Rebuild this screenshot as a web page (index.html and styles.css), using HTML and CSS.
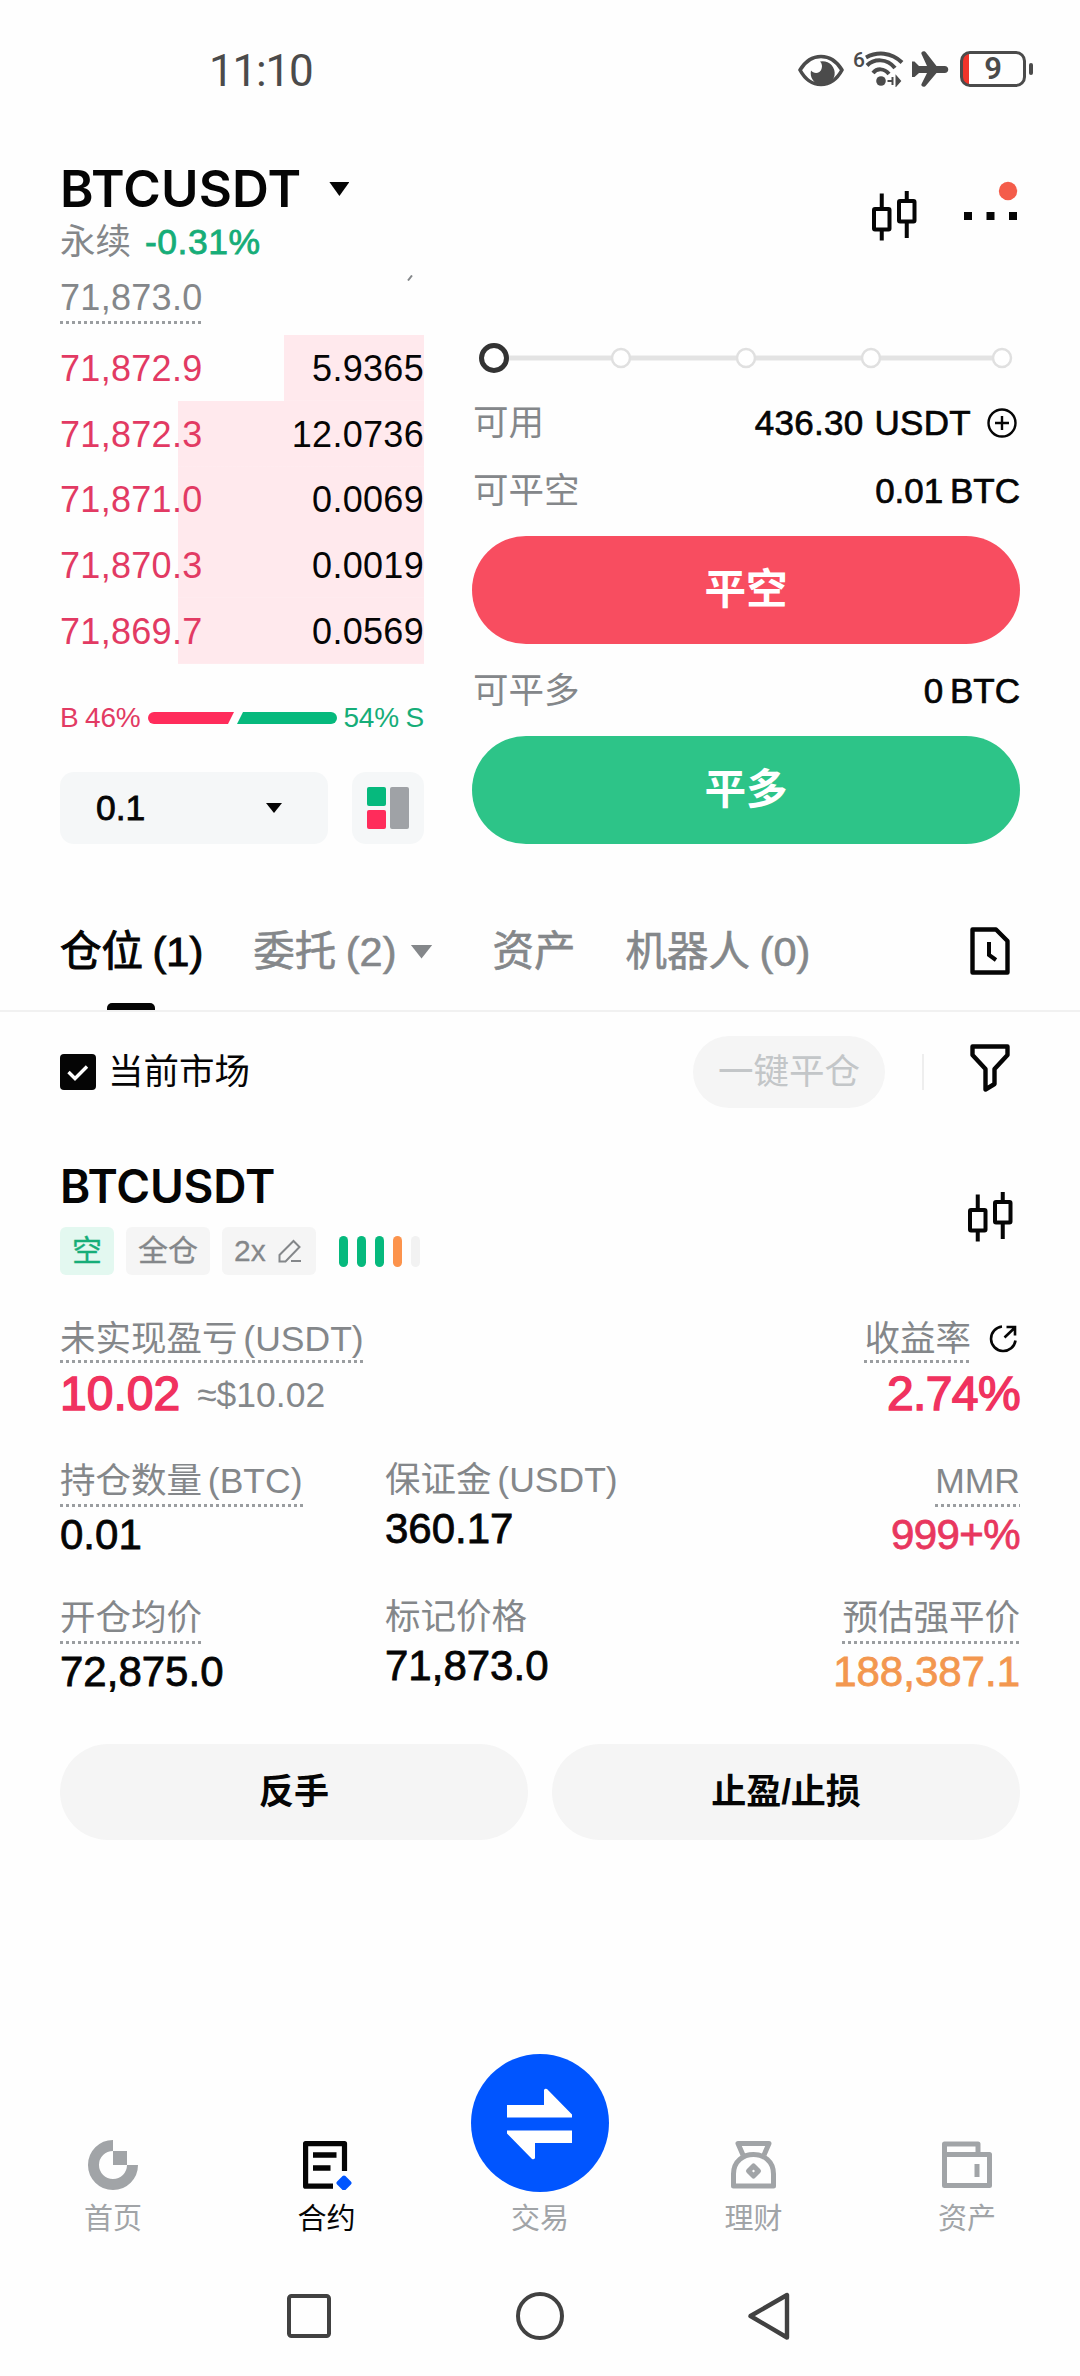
FILE: index.html
```html
<!DOCTYPE html>
<html lang="zh-CN">
<head>
<meta charset="utf-8">
<title>BTCUSDT 永续</title>
<link rel="stylesheet" href="styles.css">
</head>
<body>
<svg width="0" height="0" class="defs">
  <symbol id="candles" viewBox="0 0 45 50">
    <g fill="none" stroke="currentColor" stroke-width="4"><rect x="2" y="18" width="15.500" height="20.500" rx="1"/><rect x="27" y="10" width="15.500" height="20.500" rx="1"/><path d="M9.750 2.500V17M9.750 39V49.500M34.750 0V9M34.750 31V47"/></g>
  </symbol>
</svg>
<div class="status">
  <span class="clock">11:10</span>
  <div class="status-icons">
    <svg class="i-eye" width="46" height="34" viewBox="0 0 46 34"><path d="M2 16C8 6 16 2.500 23 2.500S38 6 44 16C38 27 30 30.500 23 30.500S8 27 2 16Z" fill="none" stroke="#4b4b4b" stroke-width="3.600" stroke-linejoin="round"/><path d="M22 7.500a12 12 0 1 1-9 9c2.500 3.500 9 3.500 10.500-1.500c1-3 .5-5.500-1.500-7.500Z" fill="#4b4b4b"/></svg>
    <span class="wifi-gen">6</span>
    <svg class="i-wifi" width="41" height="36" viewBox="0 0 41 36"><g fill="none" stroke="#4b4b4b" stroke-width="4"><path d="M2 6.500C13 .5 27 .8 38 11.500"/><path d="M3 14.500C10 7.500 23 7 31 17"/><path d="M9 22c4-5 11-5 16 1"/></g><circle cx="17" cy="30" r="4.800" fill="#4b4b4b"/><path d="M28.500 26v8M23.500 30h5M32.500 26v8l3.500-4z" fill="#4b4b4b" stroke="#4b4b4b" stroke-width="2"/></svg>
    <svg class="i-plane" width="37" height="36" viewBox="0 0 37 36"><path d="M0 10.500h2.500l4.500 4.500h8L9.500 3C8.500 .5 12.500-1 14 1.500L24.500 15H32.500c5 0 5 7 0 7H24.500L14 34.500C12.500 37 8.500 35.500 9.500 33L15 22H7l-4.500 4H0Z" fill="#4b4b4b"/></svg>
    <div class="battery"><span>9</span></div><i class="battery-cap"></i>
  </div>
</div>

<header class="header">
  <div>
    <h1 class="pair">BTCUSDT<i class="caret"></i></h1>
    <p class="kind">永续<b>-0.31%</b></p>
  </div>
  <div class="header-icons">
    <svg width="45" height="50"><use href="#candles"/></svg>
    <svg class="i-more" width="54" height="40" viewBox="0 0 54 40"><path d="M0 31h8v8H0zM22.500 31h8v8h-8zM45 31h8v8h-8z" fill="#050505"/><circle cx="44" cy="10" r="9.200" fill="#f45c4a"/></svg>
  </div>
</header>

<main class="trade">
  <section class="book">
    <div class="mark"><span class="dotted">71,873.0</span><svg width="8" height="6" viewBox="0 0 8 6"><path d="M7 .5 3 5.500" stroke="#84878a" stroke-width="2"/></svg></div>
    <div class="asks">
      <div class="ask near"><span>71,872.9</span><em>5.9365</em></div>
      <div class="ask"><span>71,872.3</span><em>12.0736</em></div>
      <div class="ask"><span>71,871.0</span><em>0.0069</em></div>
      <div class="ask"><span>71,870.3</span><em>0.0019</em></div>
      <div class="ask"><span>71,869.7</span><em>0.0569</em></div>
    </div>
    <div class="ratio"><span class="buy">B 46%</span><svg width="189" height="12" viewBox="0 0 189 12"><path d="M6 0H86L80 12H6A6 6 0 0 1 6 0Z" fill="#ff2c5b"/><path d="M95 0H183a6 6 0 0 1 0 12H89Z" fill="#06b97d"/></svg><span class="sell">54% S</span></div>
    <div class="tools">
      <div class="step"><span>0.1</span><i class="caret small"></i></div>
      <div class="layout-btn"><svg width="42" height="42" viewBox="0 0 42 42"><rect width="19" height="19" rx="2" fill="#06b97d"/><rect y="23" width="19" height="19" rx="2" fill="#ff2c5b"/><rect x="23" width="19" height="42" rx="2" fill="#9fa2a6"/></svg></div>
    </div>
  </section>
  <section class="order">
    <svg class="slider" width="548" height="32" viewBox="0 0 548 32"><path d="M30 16H530" stroke="#e3e3e3" stroke-width="5"/><g fill="#fff" stroke="#e0e0e0" stroke-width="2.500"><circle cx="149" cy="16" r="9"/><circle cx="274" cy="16" r="9"/><circle cx="399" cy="16" r="9"/><circle cx="530" cy="16" r="9"/></g><circle cx="22" cy="16" r="12.500" fill="#fff" stroke="#333" stroke-width="5"/></svg>
    <div class="info"><span>可用</span><b>436.30 USDT<svg width="30" height="30" viewBox="0 0 30 30"><circle cx="15" cy="15" r="13.500" fill="none" stroke="#050505" stroke-width="2.400"/><path d="M8 15h14M15 8v14" stroke="#050505" stroke-width="2.400"/></svg></b></div>
    <div class="info second"><span>可平空</span><b class="tight">0.01 BTC</b></div>
    <div class="btn red">平空</div>
    <div class="info third"><span>可平多</span><b class="tight">0 BTC</b></div>
    <div class="btn green">平多</div>
  </section>
</main>

<nav class="tabs">
  <span class="tab active">仓位 (1)</span>
  <span class="tab menu">委托 (2)<i class="caret"></i></span>
  <span class="tab">资产</span>
  <span class="tab">机器人 (0)</span>
  <svg class="i-doc" width="40" height="48" viewBox="0 0 40 48"><path d="M2.500 2.500H26L37.500 14V45.500H2.500Z" fill="none" stroke="#050505" stroke-width="4.400" stroke-linejoin="round"/><path d="M19 15V28L26 33" fill="none" stroke="#050505" stroke-width="4"/></svg>
</nav>

<section class="filters">
  <svg width="36" height="36" viewBox="0 0 36 36"><rect width="36" height="36" rx="4" fill="#050505"/><path d="M8.500 18l6.500 6.500L27 12.500" fill="none" stroke="#fff" stroke-width="3.400"/></svg>
  <span class="market">当前市场</span>
  <span class="close-all">一键平仓</span>
  <i class="divider"></i>
  <svg class="i-funnel" width="40" height="48" viewBox="0 0 40 48"><path d="M2.500 2.500H37.500V11L24.500 25V40L15.500 45.500V25L2.500 11Z" fill="none" stroke="#050505" stroke-width="4.400" stroke-linejoin="round"/></svg>
</section>

<section class="position">
  <div class="pos-head">
    <div>
      <h2>BTCUSDT</h2>
      <div class="tags">
        <span class="tag short">空</span><span class="tag">全仓</span><span class="tag">2x<svg width="24" height="24" viewBox="0 0 24 24"><path d="M1.500 22.500V16L15.500 2L21.500 8L7.500 22.500ZM13 22h10" fill="none" stroke="#84878a" stroke-width="2"/></svg></span>
        <div class="risk"><i></i><i></i><i></i><i class="warn"></i><i class="off"></i></div>
      </div>
    </div>
    <svg class="pos-candles" width="45" height="50"><use href="#candles"/></svg>
  </div>
  <div class="pnl">
    <div><div class="label"><span class="dotted">未实现盈亏 (USDT)</span></div><div class="big">10.02<small>≈$10.02</small></div></div>
    <div class="right"><div class="label"><span class="dotted">收益率</span><svg width="28" height="28" viewBox="0 0 28 28"><g fill="none" stroke="#050505" stroke-width="2.600"><path d="M13 1.500A12.300 12.300 0 1 0 26.500 15.500"/><path d="M15.500 12.500 26 2.500M17.500 2H26V10.500"/></g></svg></div><div class="big">2.74%</div></div>
  </div>
  <div class="stats">
    <div><div class="label"><span class="dotted">持仓数量 (BTC)</span></div><div class="value">0.01</div></div>
    <div class="plain"><div class="label"><span>保证金 (USDT)</span></div><div class="value">360.17</div></div>
    <div class="right"><div class="label"><span class="dotted">MMR</span></div><div class="value loss">999+%</div></div>
    <div><div class="label"><span class="dotted">开仓均价</span></div><div class="value">72,875.0</div></div>
    <div class="plain"><div class="label"><span>标记价格</span></div><div class="value">71,873.0</div></div>
    <div class="right"><div class="label"><span class="dotted">预估强平价</span></div><div class="value liq">188,387.1</div></div>
  </div>
  <div class="actions"><span>反手</span><span>止盈/止损</span></div>
</section>

<nav class="bottom">
  <div class="item"><svg width="50" height="50" viewBox="0 0 50 50"><path d="M25 5.500A19.500 19.500 0 1 0 44.500 25" fill="none" stroke="#a1a4a7" stroke-width="11"/><path d="M25 11h14v14H25z" fill="#a1a4a7"/></svg><span>首页</span></div>
  <div class="item on"><svg width="50" height="50" viewBox="0 0 50 50"><path d="M31 46.200H3.600V3.600H42.500V31" fill="none" stroke="#050505" stroke-width="5.200" stroke-linejoin="round"/><path d="M11 15h23.500M11 28h17.500" stroke="#050505" stroke-width="5.500"/><path d="M42 37.500 47.500 43 42 48.500 36.500 43Z" fill="#0055ff" stroke="#0055ff" stroke-width="4" stroke-linejoin="round"/></svg><span>合约</span></div>
  <div class="item swap"><svg width="138" height="138" viewBox="0 0 138 138"><circle cx="69" cy="69" r="69" fill="#0055ff"/><path d="M36 51H73V36q1-2 3-1L101 60.500V63.500H36ZM101 89H64V104q-1 2-3 1L36 79.500V76.500H101Z" fill="#fff"/></svg><span>交易</span></div>
  <div class="item"><svg width="50" height="50" viewBox="0 0 50 50"><g fill="none" stroke="#a1a4a7" stroke-width="5" stroke-linejoin="round"><path d="M14 15 9 3.500H40L35 15"/><path d="M4.500 46V34C4.500 8 44.500 8 44.500 34V46Z"/><path d="M24.500 26l5 5-5 5-5-5Z"/></g></svg><span>理财</span></div>
  <div class="item"><svg width="50" height="50" viewBox="0 0 50 50"><g fill="none" stroke="#a1a4a7" stroke-width="5" stroke-linejoin="round"><path d="M2.500 14.500V4H36V14.500"/><path d="M2.500 14.500H47.500V45.500H2.500Z"/><path d="M35 24v13"/></g></svg><span>资产</span></div>
</nav>
<footer class="system">
  <svg width="44" height="48" viewBox="0 0 44 48"><rect x="2" y="4" width="40" height="40" rx="2.500" fill="none" stroke="#414141" stroke-width="4"/></svg>
  <svg width="48" height="48" viewBox="0 0 48 48"><circle cx="24" cy="24" r="22" fill="none" stroke="#414141" stroke-width="4"/></svg>
  <svg width="42" height="48" viewBox="0 0 42 48"><path d="M39 3V45.500L2.500 24Z" fill="none" stroke="#414141" stroke-width="4.400" stroke-linejoin="round"/></svg>
</footer>
</body>
</html>
```
FILE: styles.css
```css
* { box-sizing: border-box; margin: 0; padding: 0; }
body {
  width: 1080px; height: 2376px; background: #fefefe; color: #050505; overflow: hidden;
  font-family: "Liberation Sans", "Noto Sans CJK SC", sans-serif; font-size: 35.5px; line-height: 50px;
  display: flex; flex-direction: column;
}
svg { display: block; flex: none; }
.defs { position: absolute; }
i, em { font-style: normal; }

.status { height: 138px; padding: 0 47px 0 209px; display: flex; justify-content: space-between; align-items: center; }
.clock { font-family: Roboto, sans-serif; font-size: 44px; letter-spacing: -1.2px; color: #4b4b4b; margin-top: 3px; }
.status-icons { display: flex; align-items: center; color: #4b4b4b; }
.i-eye { margin-top: 4px; }
.wifi-gen { font: 500 21px/20px Roboto, sans-serif; margin: -18px 0 0 9px; }
.i-wifi { margin-left: -1px; }
.i-plane { margin-left: 7px; }
.battery { width: 66px; height: 36px; margin-left: 11px; border: 3px solid #4b4b4b; border-radius: 10px; background: linear-gradient(90deg, #f0342a 6px, transparent 6px); display: flex; align-items: center; justify-content: center; }
.battery span { font: 600 31px/30px Roboto, sans-serif; }
.battery-cap { width: 4px; height: 12px; border-radius: 2px; background: #4b4b4b; margin-left: 3px; }

.header { height: 130px; padding: 0 62px 0 60px; display: flex; justify-content: space-between; }
.pair { margin-top: 26px; font-family: Inter, sans-serif; font-size: 51px; font-weight: 600; line-height: 50px; letter-spacing: .2px; display: flex; align-items: center; }
.caret { width: 20px; height: 14px; background: currentColor; clip-path: polygon(0 0, 100% 0, 50% 100%); margin-left: 28px; }
.caret.small { width: 16px; height: 10px; margin: 0; }
.kind { color: #84878a; line-height: 57px; }
.kind b { color: #16ad78; font-weight: 400; font-size: 35.500px; margin-left: 14px; letter-spacing: .5px; -webkit-text-stroke: .8px; }
.header-icons { display: flex; align-items: flex-start; gap: 47px; padding-top: 53px; }
.i-more { margin-top: -10px; }

.trade { display: grid; grid-template-columns: 364px 548px; column-gap: 48px; padding: 0 60px; height: 576px; }
.dotted { background: repeating-linear-gradient(90deg, #9a9da0 0 3px, transparent 3px 6px) left bottom / 100% 3px no-repeat; }
.mark { height: 67px; display: flex; justify-content: space-between; align-items: flex-start; color: #84878a; font-size: 36px; padding-right: 11px; letter-spacing: .3px; }
.mark span { height: 56px; line-height: 60px; }
.mark svg { margin-top: 7px; }
.ask { height: 65.800px; padding-top: 2px; display: flex; justify-content: space-between; align-items: center; color: #e23a63; font-size: 36px; letter-spacing: .3px; background: linear-gradient(#ffe9ed, #ffe9ed) right / 246px 100% no-repeat; }
.ask.near { background-size: 140px 100%; }
.ask em { color: #050505; }
.ratio { margin-top: 29px; height: 50px; padding-top: 1px; display: flex; align-items: center; justify-content: space-between; font-size: 28px; letter-spacing: -.2px; }
.buy { color: #e23a63; }
.sell { color: #16ad78; }
.ratio span { word-spacing: -1px; }
.tools { display: flex; justify-content: space-between; margin-top: 29px; }
.step { width: 268px; height: 72px; padding: 0 46px 0 36px; border-radius: 14px; background: #f5f7f8; display: flex; align-items: center; justify-content: space-between; -webkit-text-stroke: .8px; }
.layout-btn { width: 72px; height: 72px; border-radius: 14px; background: #f5f7f8; display: flex; align-items: center; justify-content: center; }

.order { padding-top: 74px; }
.info { display: flex; justify-content: space-between; align-items: center; height: 50px; margin-top: 23px; padding: 1px 0 0 1px; color: #84878a; }
.info b { font-weight: 400; color: #050505; font-size: 35px; letter-spacing: .3px; word-spacing: 1px; -webkit-text-stroke: .7px; display: flex; align-items: center; }
.info b.tight { word-spacing: -3px; letter-spacing: 0; }
.info b svg { margin: 0 3px 0 16px; }
.info.second { margin-top: 18px; }
.info.third { margin-top: 21px; }
.btn { height: 108px; border-radius: 54px; color: #fff; font-size: 41.5px; font-weight: 700; display: flex; align-items: center; justify-content: center; margin-top: 21px; }
.red { background: #f84d60; }
.green { background: #2dc488; }

.tabs { height: 168px; padding: 48px 70px 0 60px; border-bottom: 2px solid #f1f1f1; display: flex; align-items: flex-start; color: #84878a; font-size: 41.5px; -webkit-text-stroke: .6px; }
.tab { position: relative; height: 118px; margin-right: 50px; padding-top: 1px; display: flex; align-items: center; word-spacing: -2px; }
.tab .caret { margin-left: 14px; width: 22px; }
.tab.menu { margin-right: 60px; }
.tab.active { color: #050505; -webkit-text-stroke-width: 1px; }
.tab.active::after { content: ""; position: absolute; left: 47px; bottom: 0; width: 48px; height: 7px; border-radius: 5px 5px 0 0; background: #050505; }
.i-doc { margin: 35px 0 0 auto; }

.filters { height: 120px; padding: 0 70px 0 60px; display: flex; align-items: center; }
.market { margin-left: 12px; }
.close-all { margin-left: auto; width: 192px; height: 72px; border-radius: 36px; background: #f5f5f5; color: #c3c6c8; display: flex; align-items: center; justify-content: center; }
.divider { width: 2px; height: 36px; background: #eee; margin: 0 46px 0 37px; }
.i-funnel { margin-bottom: 9px; }

.position { padding: 0 60px; height: 852px; }
.pos-head { display: flex; justify-content: space-between; height: 177px; padding-top: 28px; }
.pos-head h2 { font-family: Inter, sans-serif; font-size: 46px; font-weight: 600; line-height: 52px; letter-spacing: -.2px; }
.pos-candles { margin: 32px 7px 0 0; }
.tags { display: flex; align-items: center; margin-top: 15px; gap: 12px; }
.tag { height: 48px; padding: 0 12px; border-radius: 6px; background: #f5f5f5; color: #84878a; font-size: 30px; display: flex; align-items: center; gap: 12px; -webkit-text-stroke: .3px; }
.tag svg { margin-right: 2px; }
.tag.short { background: #e3f8f0; color: #16ad78; }
.risk { display: flex; gap: 9px; margin-left: 11px; }
.risk i { width: 9px; height: 31px; border-radius: 5px; background: #06b97d; }
.risk .warn { background: #fc934c; }
.risk .off { background: #f2f2f2; }
.label { display: flex; align-items: center; color: #84878a; height: 54px; word-spacing: -4px; }
.label .dotted { height: 54px; line-height: 56px; }
.right .label { justify-content: flex-end; }
.right .value, .right .big { text-align: right; }
.pnl { display: flex; justify-content: space-between; }
.pnl .label .dotted { line-height: 60px; }
.label svg { margin: 6px 3px 0 18px; }
.big { height: 62px; color: #f0325f; font-size: 48px; line-height: 61px; -webkit-text-stroke: 1.500px; }
.right .big { letter-spacing: -.6px; }
.big small { font-size: 35.500px; line-height: 1; color: #84878a; margin-left: 17px; vertical-align: 3px; -webkit-text-stroke: 0; }
.stats { display: grid; grid-template-columns: 325px 325px 1fr; grid-auto-rows: 137px; margin-top: 28px; }
.value { font-size: 42px; line-height: 55px; -webkit-text-stroke: .8px; }
.plain .value { margin-top: -6px; }
.loss { color: #e8375f; letter-spacing: -.6px; }
.liq { color: #f3974f; }
.actions { display: flex; gap: 24px; margin-top: 17px; }
.actions span { flex: 1; height: 96px; border-radius: 48px; background: #f5f5f5; font-weight: 700; font-size: 35px; display: flex; align-items: center; justify-content: center; }

.bottom { display: flex; justify-content: space-between; align-items: flex-end; padding: 0 42px; height: 254px; }
.item { width: 142px; display: flex; flex-direction: column; align-items: center; color: #a1a4a7; font-size: 29px; line-height: 40px; }
.item span { margin-top: 8px; height: 40px; padding-top: 1px; }
.item.on { color: #050505; }
.swap span { margin-top: 6px; }
.system { display: flex; justify-content: space-between; padding: 0 290px 0 287px; margin-top: 54px; }
```
